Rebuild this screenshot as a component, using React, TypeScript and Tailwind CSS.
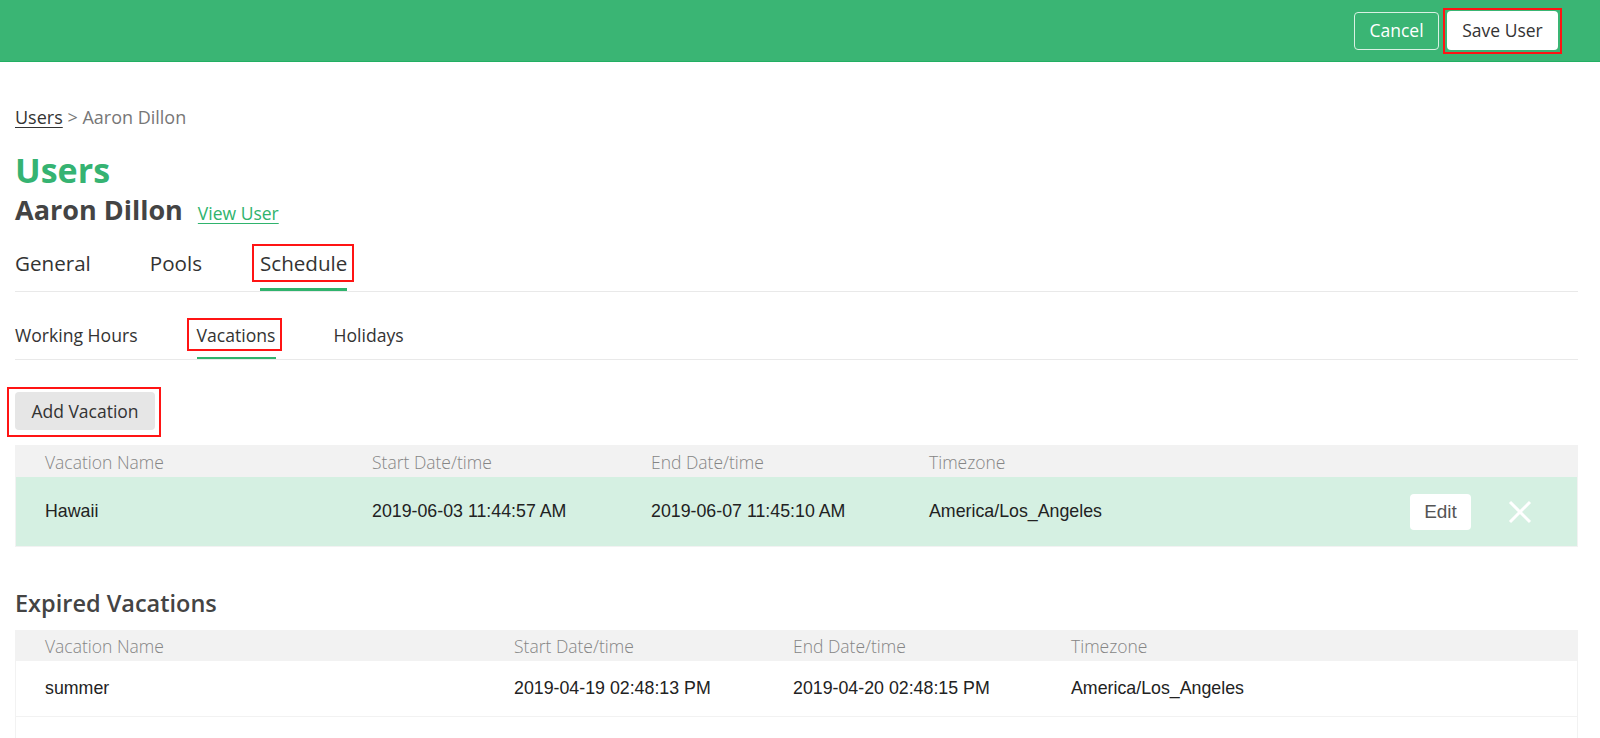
import React from "react";

function XIcon() {
  return (
    <svg width="24" height="24" viewBox="0 0 24 24" fill="none">
      <path d="M2 2 L22 22 M22 2 L2 22" stroke="white" strokeWidth="3" strokeLinecap="butt" />
    </svg>
  );
}

function RedBox({ className }: { className: string }) {
  return <div className={"pointer-events-none absolute border-2 border-[#ff1414] " + className} />;
}

export default function App() {
  return (
    <div className="h-[738px] overflow-hidden bg-white font-['Open_Sans',sans-serif] text-[#333]">
      <header className="flex h-[62px] items-center justify-end gap-[8px] border-b border-[#22b063] bg-[#3ab574] pr-[42px]">
        <button className="h-[38px] w-[85px] rounded-[4px] border border-[#d9f1e3] text-[17.5px] text-white">
          Cancel
        </button>
        <div className="relative">
          <RedBox className="-left-[4px] -right-[4px] -top-[3px] -bottom-[4px]" />
          <button className="h-[39px] w-[111px] rounded-[4px] bg-white text-[17.5px] text-[#333]">
            Save User
          </button>
        </div>
      </header>

      <main className="pl-[15px] pr-[22px]">
        <div className="mt-[43px] text-[18px] leading-[24px]">
          <span className="text-[#333] underline underline-offset-[3px]">Users</span>
          <span className="text-[#777]"> &gt; Aaron Dillon</span>
        </div>

        <h1 className="mt-[21px] text-[34px] font-bold leading-[40px] text-[#35b372]">Users</h1>
        <div className="mt-[4px] flex items-baseline gap-[15px]">
          <h2 className="text-[27px] font-bold leading-[32px] text-[#444]">Aaron Dillon</h2>
          <a className="text-[17.5px] text-[#2fb36d] underline underline-offset-[3px]">View User</a>
        </div>

        <nav className="mt-[23px] flex border-b border-[#e9e9e9] text-[20.6px] leading-[28px] text-[#333]">
          <div className="flex flex-col">
            <span>General</span>
            <div className="mt-[11px] h-[3px]" />
          </div>
          <div className="ml-[59px] flex flex-col">
            <span>Pools</span>
            <div className="mt-[11px] h-[3px]" />
          </div>
          <div className="ml-[58px] flex flex-col">
            <span className="relative">
              <RedBox className="-left-[8px] -right-[7px] -top-[5px] -bottom-[5px]" />
              Schedule
            </span>
            <div className="mt-[11px] h-[3px] bg-[#2fb36d]" />
          </div>
        </nav>

        <nav className="mt-[31px] flex border-b border-[#e9e9e9] text-[17.6px] leading-[24px] text-[#333]">
          <div className="flex flex-col">
            <span>Working Hours</span>
            <div className="mt-[10px] h-[2px]" />
          </div>
          <div className="ml-[59px] flex flex-col">
            <span className="relative">
              <RedBox className="-left-[10px] -right-[6px] -top-[5px] -bottom-[4px]" />
              Vacations
            </span>
            <div className="mt-[10px] h-[2px] bg-[#2fb36d]" />
          </div>
          <div className="ml-[58px] flex flex-col">
            <span>Holidays</span>
            <div className="mt-[10px] h-[2px]" />
          </div>
        </nav>

        <div className="relative mt-[32px] inline-block">
          <RedBox className="-left-[8px] -right-[6px] -top-[5px] -bottom-[7px]" />
          <button className="h-[38px] w-[140px] rounded-[4px] bg-[#e6e6e6] text-[17.5px] text-[#333]">
            Add Vacation
          </button>
        </div>

        <div className="mt-[15px] border border-[#f2f2f2]">
          <div className="grid h-[31px] grid-cols-[327px_279px_278px_1fr] items-center bg-[#f2f2f2] text-[17.5px] font-light text-[#858585]">
            <div className="pl-[29px]">Vacation Name</div>
            <div className="pl-[29px]">Start Date/time</div>
            <div className="pl-[29px]">End Date/time</div>
            <div className="pl-[29px]">Timezone</div>
          </div>
          <div className="grid h-[69px] grid-cols-[327px_279px_278px_1fr_auto] items-center bg-[#d5f0e2] font-['Liberation_Sans',Arial,sans-serif] text-[17.8px] text-[#222]">
            <div className="pl-[29px]">Hawaii</div>
            <div className="pl-[29px]">2019-06-03 11:44:57 AM</div>
            <div className="pl-[29px]">2019-06-07 11:45:10 AM</div>
            <div className="pl-[29px]">America/Los_Angeles</div>
            <div className="flex items-center gap-[37px] pr-[45px]">
              <button className="h-[36px] w-[61px] rounded-[4px] bg-white text-[19px] text-[#555]">Edit</button>
              <XIcon />
            </div>
          </div>
        </div>

        <h3 className="mt-[42px] text-[23.5px] font-semibold leading-[28px] text-[#444]">Expired Vacations</h3>

        <div className="mt-[13px] border border-[#f2f2f2]">
          <div className="grid h-[30px] grid-cols-[469px_279px_278px_1fr] items-center bg-[#f2f2f2] text-[17.5px] font-light text-[#858585]">
            <div className="pl-[29px]">Vacation Name</div>
            <div className="pl-[29px]">Start Date/time</div>
            <div className="pl-[29px]">End Date/time</div>
            <div className="pl-[29px]">Timezone</div>
          </div>
          <div className="grid h-[56px] grid-cols-[469px_279px_278px_1fr] items-center border-b border-[#f2f2f2] bg-white font-['Liberation_Sans',Arial,sans-serif] text-[17.8px] text-[#222]">
            <div className="pl-[29px]">summer</div>
            <div className="pl-[29px]">2019-04-19 02:48:13 PM</div>
            <div className="pl-[29px]">2019-04-20 02:48:15 PM</div>
            <div className="pl-[29px]">America/Los_Angeles</div>
          </div>
          <div className="h-[40px]" />
        </div>
      </main>
    </div>
  );
}
